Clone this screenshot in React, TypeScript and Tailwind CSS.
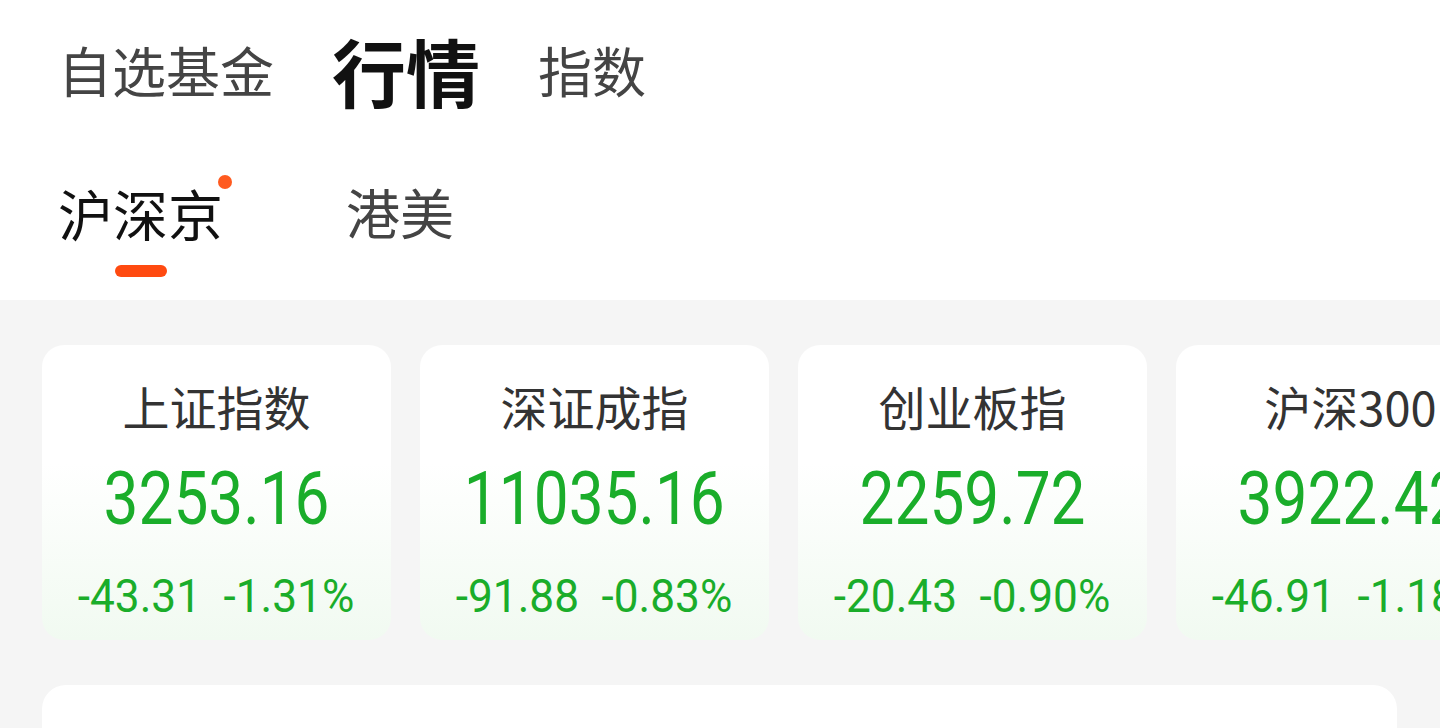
import React from "react";

type IndexCard = {
  name: string;
  value: string;
  change: string;
  percent: string;
};

const indices: IndexCard[] = [
  { name: "上证指数", value: "3253.16", change: "-43.31", percent: "-1.31%" },
  { name: "深证成指", value: "11035.16", change: "-91.88", percent: "-0.83%" },
  { name: "创业板指", value: "2259.72", change: "-20.43", percent: "-0.90%" },
  { name: "沪深300", value: "3922.42", change: "-46.91", percent: "-1.18%" },
];

const cjk = "font-['Noto_Sans_CJK_SC',sans-serif]";
const num = "font-['Roboto',sans-serif]";

const Card: React.FC<{ item: IndexCard }> = ({ item }) => (
  <div className="flex h-[295px] w-[349px] shrink-0 flex-col items-center rounded-[22px] bg-linear-to-b from-white from-40% to-[#f1faf1] pt-[37px]">
    <div className={`${cjk} text-[47px] leading-none text-[#333]`}>{item.name}</div>
    <div
      className={`${num} mt-[33px] inline-block scale-x-[0.84] whitespace-nowrap text-[74px] leading-none text-[#1aad2a]`}
    >
      {item.value}
    </div>
    <div
      className={`${num} mt-[36px] flex scale-x-[0.94] gap-[24px] whitespace-nowrap text-[47px] leading-none text-[#1aad2a]`}
    >
      <span>{item.change}</span>
      <span>{item.percent}</span>
    </div>
  </div>
);

export default function App() {
  return (
    <div className="h-[728px] w-[1440px] overflow-hidden bg-[#f5f5f5]">
      <div className="h-[300px] bg-white pl-[58px]">
        <div className={`${cjk} flex h-[140px] items-center gap-[58px] leading-none`}>
          <span className="text-[54px] text-[#444]">自选基金</span>
          <span className="text-[74px] font-bold text-[#111]">行情</span>
          <span className="text-[54px] text-[#444]">指数</span>
        </div>
        <div className={`${cjk} flex gap-[123px] pt-[45px] leading-none`}>
          <div className="flex flex-col items-center">
            <div className="relative text-[55px] text-[#111]">
              沪深京
              <span className="absolute left-[160px] top-[-10px] size-[14px] rounded-full bg-[#ff5a1f]" />
            </div>
            <div className="mt-[25px] h-[12px] w-[52px] rounded-full bg-[#ff4a10]" />
          </div>
          <div className="text-[54px] text-[#444]">港美</div>
        </div>
      </div>
      <div className="flex gap-[29px] pl-[42px] pt-[45px]">
        {indices.map((item) => (
          <Card key={item.name} item={item} />
        ))}
      </div>
      <div className="ml-[42px] mt-[45px] h-[200px] w-[1355px] rounded-t-[24px] bg-white" />
    </div>
  );
}
